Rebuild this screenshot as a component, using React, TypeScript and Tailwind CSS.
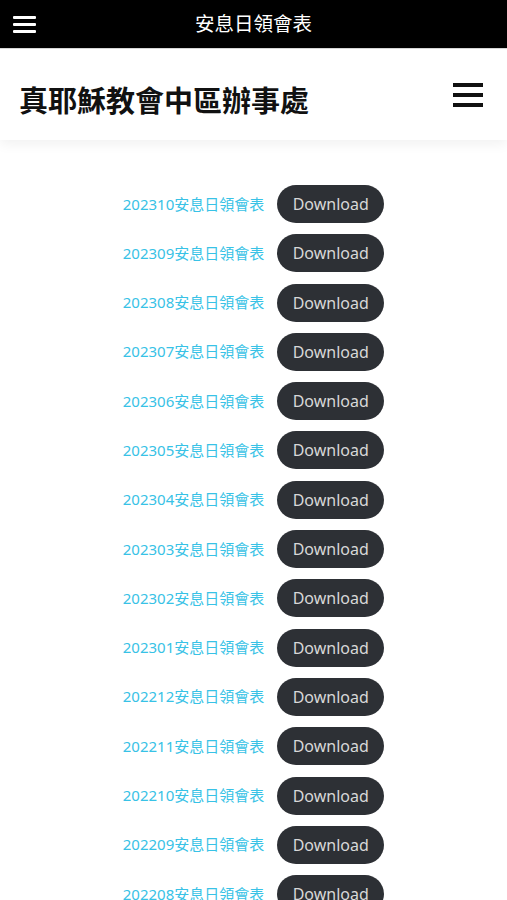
import React from "react";

const items = [
  "202310", "202309", "202308", "202307", "202306", "202305", "202304", "202303",
  "202302", "202301", "202212", "202211", "202210", "202209", "202208", "202207",
];

export default function App() {
  return (
    <div className="w-[507px] h-[900px] overflow-hidden bg-white" style={{ fontFamily: '"Noto Sans", "Noto Sans CJK TC", sans-serif' }}>
      <div className="h-[48px] bg-black relative flex items-center justify-center">
        <div className="absolute left-[13px] top-[16px]">
          <div className="flex flex-col w-[23px] gap-[4px]">
            <div className="h-[3px] bg-white rounded-[1px]" />
            <div className="h-[3px] bg-white rounded-[1px]" />
            <div className="h-[3px] bg-white rounded-[1px]" />
          </div>
        </div>
        <span className="text-white text-[19.5px] leading-none -mt-[2px]" style={{ fontFamily: '"Noto Sans CJK TC", sans-serif' }}>安息日領會表</span>
      </div>
      <div className="h-px bg-[#d9d9d9]" />
      <div className="h-[91px] bg-white flex items-center justify-between pl-[19px] pr-[24px] shadow-[0_4px_12px_rgba(0,0,0,0.06)] relative">
        <span className="text-[29px] font-bold text-[#111] leading-none mt-[9px]" style={{ fontFamily: '"Noto Sans CJK TC", sans-serif' }}>真耶穌教會中區辦事處</span>
        <div className="flex flex-col w-[30px] gap-[6px]">
          <div className="h-[4px] bg-[#111]" />
          <div className="h-[4px] bg-[#111]" />
          <div className="h-[4px] bg-[#111]" />
        </div>
      </div>
      <div className="pt-[45px] flex flex-col items-center">
        {items.map((d) => (
          <div key={d} className="h-[49.3px] flex items-start">
            <div className="flex items-center gap-[13px]">
              <a className="text-[15px] text-[#38c2e6] leading-none">{d}安息日領會表</a>
              <button className="w-[107px] h-[38px] rounded-full bg-[#2d3035] text-[#d8d8d8] text-[16px] leading-none">Download</button>
            </div>
          </div>
        ))}
      </div>
    </div>
  );
}
